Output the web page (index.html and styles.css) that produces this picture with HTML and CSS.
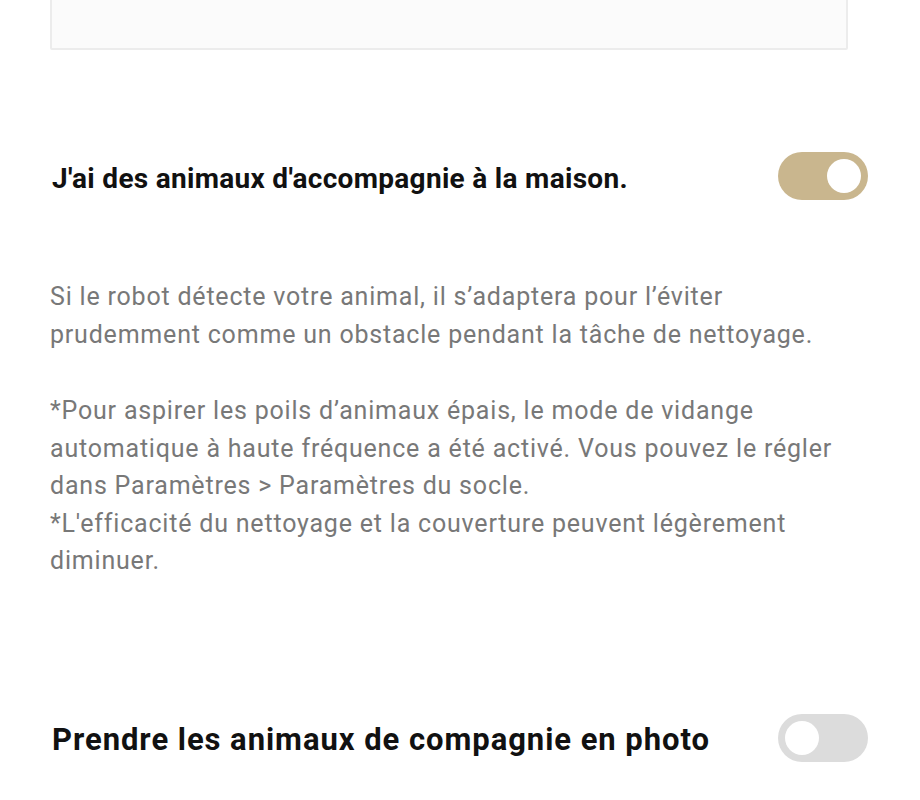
FILE: index.html
```html
<!DOCTYPE html>
<html lang="fr">
<head>
  <meta charset="UTF-8">
  <meta name="viewport" content="width=device-width, initial-scale=1.0">
  <title>Animaux d'accompagnie</title>
  <link rel="stylesheet" href="styles.css">
</head>
<body>

  <!-- Carte du haut (coupée) -->
  <div class="topCard"></div>

  <!-- Animaux à la maison -->
  <div class="settingRow rowPets">
    <h2 class="settingTitle">J'ai des animaux d'accompagnie à la maison.</h2>
    <span class="toggle on"><span class="knob"></span></span>
  </div>

  <section class="description">
    <p>Si le robot détecte votre animal, il s’adaptera pour l’éviter prudemment comme un obstacle pendant la tâche de nettoyage.</p>
    <p>*Pour aspirer les poils d’animaux épais, le mode de vidange automatique à haute fréquence a été activé. Vous pouvez le régler dans Paramètres &gt; Paramètres du socle.<br>*L'efficacité du nettoyage et la couverture peuvent légèrement diminuer.</p>
  </section>

  <!-- Photo des animaux -->
  <div class="settingRow rowPhoto">
    <h2 class="settingTitle big">Prendre les animaux de compagnie en photo</h2>
    <span class="toggle"><span class="knob"></span></span>
  </div>

</body>
</html>
```

FILE: styles.css
```css
body {
  font-family: Roboto, "Noto Sans", Arial, sans-serif;
  margin: 0;
  padding: 0;
  background-color: #ffffff;
  width: 920px;
  height: 800px;
  overflow: hidden;
}

.topCard {
  margin: -20px 72px 0 50px;
  height: 66px;
  background-color: #fbfbfb;
  border: 2px solid #ececec;
  border-radius: 2px;
}

.settingRow {
  display: flex;
  align-items: center;
  justify-content: space-between;
  padding: 0 52px 0 52px;
}

.rowPets {
  margin-top: 102px;
}

.rowPhoto {
  margin-top: 134px;
}

.settingTitle {
  margin: 0;
  padding-top: 4px;
  font-size: 28px;
  font-weight: 700;
  letter-spacing: 0.3px;
  color: #111111;
}

.settingTitle.big {
  padding-top: 3px;
  font-size: 31px;
  letter-spacing: 0.95px;
}

.toggle {
  position: relative;
  width: 90px;
  height: 48px;
  border-radius: 24px;
  background-color: #dcdcdc;
  flex-shrink: 0;
}

.toggle .knob {
  position: absolute;
  top: 7px;
  left: 7px;
  width: 34px;
  height: 34px;
  border-radius: 50%;
  background-color: #ffffff;
}

.toggle.on {
  background-color: #c9b68e;
}

.toggle.on .knob {
  left: auto;
  right: 7px;
}

.description {
  padding: 0 50px;
  margin-top: 78px;
  color: #787878;
  font-size: 25px;
  letter-spacing: 0.8px;
  line-height: 37.5px;
}

.description p {
  margin: 0 0 39px 0;
}
```
